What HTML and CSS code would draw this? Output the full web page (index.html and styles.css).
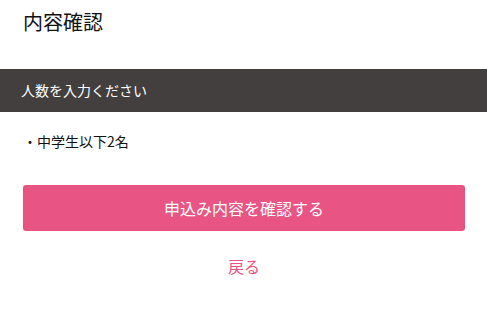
FILE: index.html
```html
<!DOCTYPE html>
<html lang="ja">
<head>
<meta charset="utf-8">
<link rel="stylesheet" href="styles.css">
</head>
<body>
<header class="page-head">
  <h1 class="title">内容確認</h1>
</header>
<section class="group">
  <h2 class="group-title">人数を入力ください</h2>
  <ul class="items">
    <li class="item">・中学生以下2名</li>
  </ul>
</section>
<div class="actions">
  <button class="btn-primary" type="button">申込み内容を確認する</button>
  <a class="back" href="#">戻る</a>
</div>
</body>
</html>
```
FILE: styles.css
```css
html, body {
  margin: 0;
  padding: 0;
  background: #fff;
  font-family: "Noto Sans CJK JP", "Noto Sans", sans-serif;
  color: #111;
}
.page-head {
  height: 69px;
  padding: 0 23px;
  box-sizing: border-box;
}
.title {
  margin: 0;
  padding-top: 9px;
  font-size: 20px;
  line-height: 26px;
  font-weight: normal;
}
.group-title {
  margin: 0;
  height: 43px;
  padding: 0 21px;
  background: #433f3e;
  color: #fff;
  font-size: 14px;
  line-height: 43px;
  font-weight: normal;
}
.items {
  list-style: none;
  margin: 0;
  padding: 19px 23px 0;
}
.item {
  font-size: 14px;
  line-height: 20px;
}
.actions {
  display: flex;
  flex-direction: column;
  align-items: center;
  padding: 34px 22px 0 23px;
}
.btn-primary {
  width: 100%;
  height: 46px;
  border: 0;
  border-radius: 3px;
  background: #e85483;
  color: #fff;
  font-family: inherit;
  font-size: 16px;
  padding: 0;
}
.back {
  margin-top: 24px;
  color: #e85483;
  text-decoration: none;
  font-size: 16px;
  line-height: 22px;
}
```
